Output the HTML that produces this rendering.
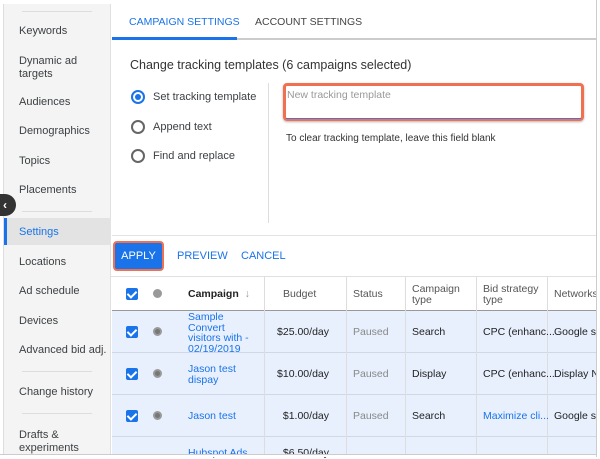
<!DOCTYPE html>
<html><head><style>
*{box-sizing:border-box;margin:0;padding:0}
body{width:600px;height:457px;background:#fff;font-family:"Liberation Sans",sans-serif;position:relative;overflow:hidden;color:#3c4043}
.a{position:absolute}
#frame{left:3px;top:4px;width:594px;height:451px;border:1px solid #ddd;border-top:none;overflow:hidden;background:#fff}
#side{left:4px;top:4px;width:107px;height:450px;background:#f4f4f4;border-right:1px solid #e0e0e0}
.si{position:absolute;left:15px;font-size:11px;color:#3c4043;line-height:13px}
.hr{position:absolute;left:22px;width:70px;height:1px;background:#ddd}
.tab{font-size:10px;top:16px}
.rad{width:14px;height:14px;border:2px solid #666;border-radius:50%}
.rl{font-size:11px;color:#3c4043}
.cb{width:12px;height:12px;background:#1a73e8;border-radius:2px}
.cb:after{content:"";position:absolute;left:3px;top:1px;width:4px;height:7px;border:solid #fff;border-width:0 2px 2px 0;transform:rotate(45deg)}
.dot{width:9px;height:9px;border-radius:50%;background:#999}
.rdot{width:9px;height:9px;border-radius:50%;background:#777;border:2px solid #999}
.t{font-size:10.5px;line-height:10.5px;white-space:nowrap}
.r{text-align:right;width:80px}
.vl{width:1px;background:#ddd}
</style></head><body>
<div class="a" id="frame"></div>
<div class="a" id="side"></div>
<div class="hr" style="top:11px"></div>
<div class="si" style="top:25px;left:19px">Keywords</div>
<div class="si" style="top:55px;left:19px">Dynamic ad<br>targets</div>
<div class="si" style="top:96px;left:19px">Audiences</div>
<div class="si" style="top:125px;left:19px">Demographics</div>
<div class="si" style="top:155px;left:19px">Topics</div>
<div class="si" style="top:184px;left:19px">Placements</div>
<div class="hr" style="top:211px"></div>
<div class="a" style="left:4px;top:218px;width:107px;height:27px;background:#e3e3e3;border-left:3px solid #1a73e8"></div>
<div class="si" style="top:226px;left:19px;color:#1a73e8">Settings</div>
<div class="si" style="top:256px;left:19px">Locations</div>
<div class="si" style="top:285px;left:19px">Ad schedule</div>
<div class="si" style="top:315px;left:19px">Devices</div>
<div class="si" style="top:344px;left:19px">Advanced bid adj.</div>
<div class="hr" style="top:371px"></div>
<div class="si" style="top:386px;left:19px">Change history</div>
<div class="hr" style="top:413px"></div>
<div class="si" style="top:429px;left:19px">Drafts &amp;<br>experiments</div>
<div class="a" style="left:0;top:194px;width:16px;height:22px;background:#333;border-radius:0 11px 11px 0;color:#fff;font-size:12px;font-weight:bold;line-height:22px;padding-left:3px">‹</div>

<div class="a tab" style="left:129px;color:#1a73e8;font-size:10.5px">CAMPAIGN SETTINGS</div>
<div class="a tab" style="left:255px;color:#444;font-size:10.5px">ACCOUNT SETTINGS</div>
<div class="a" style="left:112px;top:38px;width:484px;height:2px;background:#ccc"></div>
<div class="a" style="left:112px;top:37px;width:125px;height:3px;background:#1a73e8"></div>
<div class="a" style="left:130px;top:58px;font-size:12.5px;color:#333">Change tracking templates (6 campaigns selected)</div>
<div class="a rad" style="left:131px;top:90px;border-color:#1a73e8"></div>
<div class="a" style="left:135px;top:94px;width:6px;height:6px;border-radius:50%;background:#1a73e8"></div>
<div class="a rl" style="left:153px;top:91px">Set tracking template</div>
<div class="a rad" style="left:131px;top:120px"></div>
<div class="a rl" style="left:153px;top:121px">Append text</div>
<div class="a rad" style="left:131px;top:149px"></div>
<div class="a rl" style="left:153px;top:150px">Find and replace</div>
<div class="a vl" style="left:268px;top:83px;height:140px"></div>
<div class="a" style="left:283px;top:83px;width:301px;height:38px;border:3px solid #f07050;border-radius:4px;box-shadow:0 1px 2px rgba(0,0,0,.3)"></div>
<div class="a" style="left:286px;top:118px;width:295px;height:1px;background:#4a74d8"></div>
<div class="a" style="left:287px;top:89px;font-size:10.5px;color:#999">New tracking template</div>
<div class="a" style="left:286px;top:133px;font-size:10px;color:#333">To clear tracking template, leave this field blank</div>
<div class="a" style="left:112px;top:235px;width:484px;height:1px;background:#e3e3e3"></div>

<div class="a" style="left:113px;top:241px;width:51px;height:30px;border:2px solid #f07050;border-radius:4px;background:#1a73e8;color:#fff;font-size:11px;text-align:center;line-height:27px">APPLY</div>
<div class="a" style="left:177px;top:250px;font-size:11px;color:#1a73e8">PREVIEW</div>
<div class="a" style="left:241px;top:250px;font-size:11px;color:#1a73e8">CANCEL</div>
<div class="a" style="left:111px;top:276px;width:485px;height:1px;background:#e0e0e0"></div>

<div class="a" style="left:112px;top:310px;width:484px;height:145px;background:#e8f0fe"></div>
<div class="a" style="left:112px;top:310px;width:484px;height:1px;background:#999"></div>
<div class="a" style="left:112px;top:352px;width:484px;height:1px;background:#d0d8e8"></div>
<div class="a" style="left:112px;top:394px;width:484px;height:1px;background:#d0d8e8"></div>
<div class="a" style="left:112px;top:436px;width:484px;height:1px;background:#d0d8e8"></div>
<div class="a vl" style="left:264px;top:277px;height:178px"></div>
<div class="a vl" style="left:346px;top:277px;height:178px"></div>
<div class="a vl" style="left:405px;top:277px;height:178px"></div>
<div class="a vl" style="left:476px;top:277px;height:178px"></div>
<div class="a vl" style="left:547px;top:277px;height:178px"></div>

<div class="a cb" style="left:126px;top:288px"></div><div class="a dot" style="left:153px;top:289px"></div>
<div class="a t" style="left:188px;top:289px;font-weight:bold;color:#222">Campaign <span style="color:#999;font-weight:normal">&nbsp;↓</span></div>
<div class="a t" style="left:283px;top:289px;color:#555">Budget</div>
<div class="a t" style="left:353px;top:289px;color:#555">Status</div>
<div class="a t" style="left:412px;top:284px;color:#555">Campaign<br>type</div>
<div class="a t" style="left:483px;top:284px;color:#555">Bid strategy<br>type</div>
<div class="a t" style="left:554px;top:289px;color:#555">Networks</div>

<div class="a cb" style="left:126px;top:326px"></div><div class="a rdot" style="left:153px;top:327px"></div>
<div class="a t" style="left:188px;top:312px;color:#1a73e8">Sample<br>Convert<br>visitors with -<br>02/19/2019</div>
<div class="a t r" style="left:249px;top:327px;color:#222">$25.00/day</div>
<div class="a t" style="left:353px;top:327px;color:#888">Paused</div>
<div class="a t" style="left:412px;top:327px;color:#222">Search</div>
<div class="a t" style="left:483px;top:327px;color:#222">CPC (enhanc...</div>
<div class="a t" style="left:554px;top:327px;color:#222">Google sea</div>

<div class="a cb" style="left:126px;top:368px"></div><div class="a rdot" style="left:153px;top:369px"></div>
<div class="a t" style="left:188px;top:364px;color:#1a73e8">Jason test<br>dispay</div>
<div class="a t r" style="left:249px;top:369px;color:#222">$10.00/day</div>
<div class="a t" style="left:353px;top:369px;color:#888">Paused</div>
<div class="a t" style="left:412px;top:369px;color:#222">Display</div>
<div class="a t" style="left:483px;top:369px;color:#222">CPC (enhanc...</div>
<div class="a t" style="left:554px;top:369px;color:#222">Display Ne</div>

<div class="a cb" style="left:126px;top:410px"></div><div class="a rdot" style="left:153px;top:411px"></div>
<div class="a t" style="left:188px;top:411px;color:#1a73e8">Jason test</div>
<div class="a t r" style="left:249px;top:411px;color:#222">$1.00/day</div>
<div class="a t" style="left:353px;top:411px;color:#888">Paused</div>
<div class="a t" style="left:412px;top:411px;color:#222">Search</div>
<div class="a t" style="left:483px;top:411px;color:#1a73e8">Maximize cli...</div>
<div class="a t" style="left:554px;top:411px;color:#222">Google sea</div>
<div class="a t" style="left:188px;top:448px;color:#1a73e8">Hubspot Ads</div>
<div class="a t r" style="left:249px;top:448px;color:#222">$6.50/day</div>
<div class="a" style="left:0;top:454px;width:600px;height:3px;background:#fff;border-top:1px solid #ccc"></div>
<div class="a" style="left:596px;top:0;width:4px;height:457px;background:#fff;border-left:1px solid #ccc"></div>
</body></html>
